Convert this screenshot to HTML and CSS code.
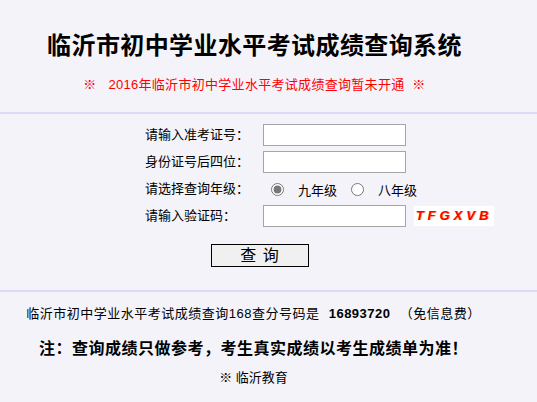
FILE: index.html
```html
<!DOCTYPE html>
<html lang="zh-CN">
<head>
<meta charset="utf-8">
<title>临沂市初中学业水平考试成绩查询系统</title>
<link rel="stylesheet" href="styles.css">
</head>
<body>

<!-- 标题 -->
<div class="head">
  <h1>临沂市初中学业水平考试成绩查询系统</h1>
  <p class="notice">※&nbsp;&nbsp; 2016年临沂市初中学业水平考试成绩查询暂未开通&nbsp; ※</p>
</div>

<!-- 查询表单 -->
<div class="main">
  <form class="form" onsubmit="return false">
    <label class="lbl">请输入准考证号：</label>
    <div class="ctl"><input type="text" class="txt"></div>

    <label class="lbl">身份证号后四位：</label>
    <div class="ctl"><input type="text" class="txt"></div>

    <label class="lbl">请选择查询年级：</label>
    <div class="ctl radios">
      <input type="radio" name="nj" id="nj9" checked><label for="nj9">九年级</label>
      <input type="radio" name="nj" id="nj8"><label for="nj8">八年级</label>
    </div>

    <label class="lbl">请输入验证码：</label>
    <div class="ctl"><input type="text" class="txt"><span class="code">TFGXVB</span></div>
  </form>
  <div class="btnrow"><button class="btn">查 询</button></div>
</div>

<!-- 底部说明 -->
<div class="foot">
  <p class="tel">临沂市初中学业水平考试成绩查询168查分号码是 <b>16893720</b> （免信息费）</p>
  <p class="tip">注：查询成绩只做参考，考生真实成绩以考生成绩单为准！</p>
  <p class="src">※ 临沂教育</p>
</div>

</body>
</html>
```

FILE: styles.css
```css
/* --------- 通用 --------- */
*{box-sizing:border-box;margin:0;padding:0}
body{
  font-family:"Liberation Sans","Noto Sans CJK SC",sans-serif;
  font-size:13px;
  color:#000;
  background:#f3f3f9;
  width:537px;
  height:402px;
  overflow:hidden;
}

/* --------- 标题 --------- */
.head{
  height:114px;
  border-bottom:2px solid #dcdaf7;
  text-align:center;
  padding:31px 28px 0 0;   /* 原页面略偏左 */
}
.head h1{font-size:24px;font-weight:bold;line-height:30px;letter-spacing:.4px}
.notice{color:#ff0000;font-size:13px;line-height:16px;margin-top:16px;letter-spacing:.3px}

/* --------- 表单 --------- */
.main{height:178px;border-bottom:2px solid #dcdaf7;padding-top:10px}
.form{
  display:grid;
  grid-template-columns:118px auto;
  row-gap:5px;
  margin-left:145px;
}
.lbl{line-height:22px;height:22px;font-size:13px}
.ctl{display:flex;align-items:center;height:22px}
.txt{
  width:143px;
  height:22px;
  border:1px solid #a5a5a5;
  background:#fff;
  outline:none;
}
.radios input{margin:0 0 0 8px;width:13px;height:13px;accent-color:#777}
.radios label{margin-left:14px;margin-right:6px}
.code{
  display:inline-block;
  margin-left:8px;
  width:80px;
  height:20px;
  background:#fff;
  color:#ff0000;
  font-family:"Liberation Sans",sans-serif;
  font-weight:bold;
  font-style:italic;
  font-size:13px;
  line-height:20px;
  letter-spacing:4px;
  text-align:center;
  text-shadow:1px 0 0 #ff9a3a;
}
.btnrow{padding-left:211px;margin-top:17px}
.btn{
  width:98px;
  height:23px;
  border:1px solid #000;
  background:#f0f0f0;
  font-family:inherit;
  font-size:16px;
  line-height:20px;
  letter-spacing:1px;
}

/* --------- 底部 --------- */
.foot{text-align:center;padding-right:30px}
.tel{font-size:13px;line-height:16px;margin-top:14px;letter-spacing:.5px}
.tel b{font-size:13px;padding:0 5px}
.tip{font-size:16px;font-weight:bold;line-height:20px;margin-top:17px;letter-spacing:.5px}
.src{font-size:13px;line-height:16px;margin-top:11px}
```
